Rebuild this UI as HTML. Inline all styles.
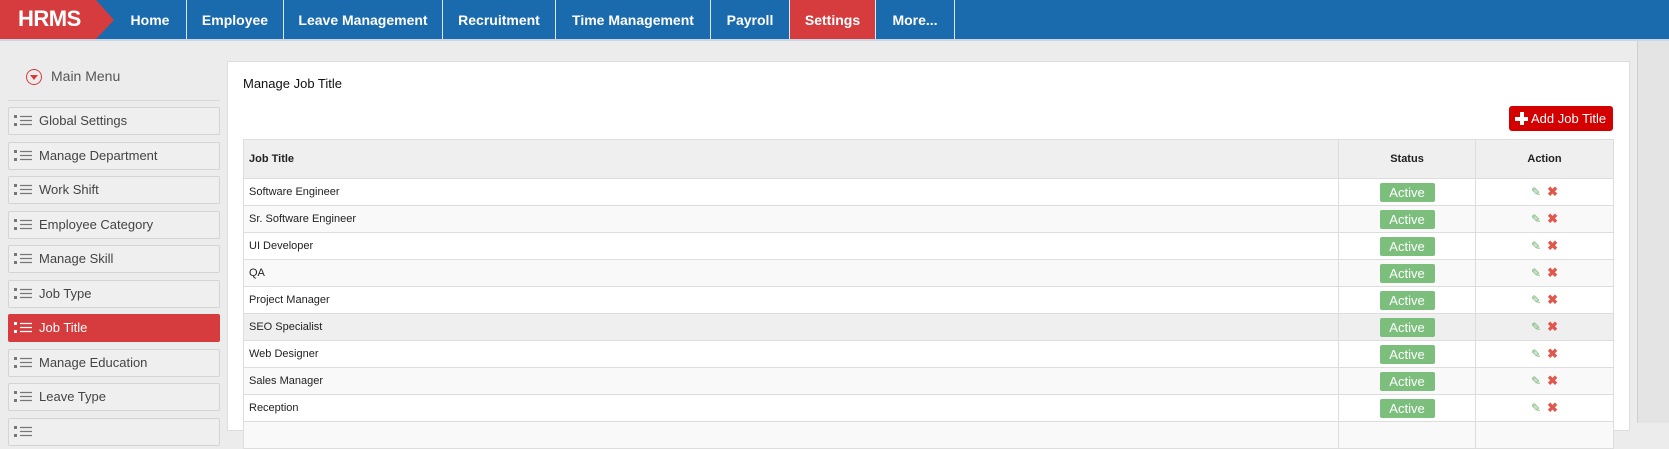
<!DOCTYPE html>
<html><head><style>
*{margin:0;padding:0;box-sizing:border-box}
body{width:1669px;height:423px;overflow:hidden;background:#ececec;font-family:"Liberation Sans",sans-serif;position:relative}
.nav{position:absolute;left:0;top:0;width:1669px;height:41px;background:#1a6aae;border-bottom:2px solid #c9d6e3}
.logo{position:absolute;left:0;top:0;width:96px;height:39px;background:#d63c3e;color:#fff;font-weight:bold;font-size:22px;padding:6px 0 0 18px;letter-spacing:-0.5px}
.logo:after{content:"";position:absolute;right:-18px;top:0;border-left:18px solid #d63c3e;border-top:20px solid transparent;border-bottom:19px solid transparent}
.ni{position:absolute;top:0;height:39px;color:#fff;font-weight:bold;font-size:14px;line-height:40px;text-align:center;border-right:1px solid #dfe8f2}
.side{position:absolute;left:8px;width:212px;height:28px;background:#efefef;border:1px solid #d4d4d4;border-radius:2px;font-size:13px;color:#444;line-height:26px;padding-left:30px}
.side i{position:absolute;left:5px;top:7px;width:20px;height:12px}
.side svg{display:block}
.side.act{background:#d63c3e;border-color:#d63c3e;color:#fff}
.panel{position:absolute;left:227px;top:61px;width:1403px;height:370px;background:#fff;border:1px solid #ddd}
table{position:absolute;left:243px;top:139px;width:1371px;border-collapse:collapse;font-size:11px;color:#222}
td,th{border:1px solid #ddd;height:27px;padding:0 5px;vertical-align:middle}
th{height:39px;background:#efefef;font-weight:bold;text-align:left}
tr:nth-child(odd) td{background:#f9f9f9}
.c{text-align:center}
.b{display:inline-block;background:#7cbf7d;color:#fff;font-size:13px;width:55px;height:19px;line-height:19px;border-radius:2px}
.x{color:#e2574c;font-weight:bold;font-size:13px;margin-left:6px}
.p{color:#6fb06f;font-size:12px}
</style></head><body>
<div class="nav">
<div class="logo">HRMS</div>
<div class="ni" style="left:114px;width:73px;border-left:none">Home</div>
<div class="ni" style="left:187px;width:97px">Employee</div>
<div class="ni" style="left:284px;width:159px">Leave Management</div>
<div class="ni" style="left:443px;width:113px">Recruitment</div>
<div class="ni" style="left:556px;width:155px">Time Management</div>
<div class="ni" style="left:711px;width:79px">Payroll</div>
<div class="ni" style="left:790px;width:86px;background:#d63c3e">Settings</div>
<div class="ni" style="left:876px;width:79px">More...</div>
</div>
<div style="position:absolute;left:26px;top:69px;width:16px;height:16px;border:1.5px solid #d63c3e;border-radius:50%"><div style="position:absolute;left:3px;top:5px;border-top:5px solid #d63c3e;border-left:4px solid transparent;border-right:4px solid transparent"></div></div>
<div style="position:absolute;left:51px;top:68px;font-size:14px;color:#555">Main Menu</div>
<div style="position:absolute;left:8px;top:100px;width:212px;border-top:1px solid #d8d8d8"></div>
<div id="s"></div>
<div class="panel"></div>
<div style="position:absolute;left:243px;top:76px;font-size:13px;color:#111">Manage Job Title</div>
<div style="position:absolute;left:1509px;top:106px;width:104px;height:25px;background:#d40000;border-radius:3px;color:#fff;font-size:13px;line-height:25px;padding-left:22px"><span style="position:absolute;left:6px;top:6px;width:13px;height:13px;background:linear-gradient(#fff,#fff) center/13px 4px no-repeat,linear-gradient(#fff,#fff) center/4px 13px no-repeat"></span>Add Job Title</div>
<table>
<tr><th>Job Title</th><th class="c" style="width:137px">Status</th><th class="c" style="width:138px">Action</th></tr>
<tr><td>Software Engineer</td><td class="c"><span class="b">Active</span></td><td class="c"><span class="p">✎</span><span class="x">✖</span></td></tr>
<tr><td>Sr. Software Engineer</td><td class="c"><span class="b">Active</span></td><td class="c"><span class="p">✎</span><span class="x">✖</span></td></tr>
<tr><td>UI Developer</td><td class="c"><span class="b">Active</span></td><td class="c"><span class="p">✎</span><span class="x">✖</span></td></tr>
<tr><td>QA</td><td class="c"><span class="b">Active</span></td><td class="c"><span class="p">✎</span><span class="x">✖</span></td></tr>
<tr><td>Project Manager</td><td class="c"><span class="b">Active</span></td><td class="c"><span class="p">✎</span><span class="x">✖</span></td></tr>
<tr><td style="background:#efefef">SEO Specialist</td><td class="c" style="background:#efefef"><span class="b">Active</span></td><td class="c" style="background:#efefef"><span class="p">✎</span><span class="x">✖</span></td></tr>
<tr><td>Web Designer</td><td class="c"><span class="b">Active</span></td><td class="c"><span class="p">✎</span><span class="x">✖</span></td></tr>
<tr><td>Sales Manager</td><td class="c"><span class="b">Active</span></td><td class="c"><span class="p">✎</span><span class="x">✖</span></td></tr>
<tr><td>Reception</td><td class="c"><span class="b">Active</span></td><td class="c"><span class="p">✎</span><span class="x">✖</span></td></tr>
<tr><td>&nbsp;</td><td></td><td></td></tr>
</table>
<div style="position:absolute;left:1637px;top:41px;width:32px;height:382px;background:#e4e4e4;border-left:1px solid #cfcfcf"></div>
<script>
var n=["Global Settings","Manage Department","Work Shift","Employee Category","Manage Skill","Job Type","Job Title","Manage Education","Leave Type",""],h="";
for(var i=0;i<n.length;i++){var a=i==6,c=a?"#fff":"#777";
h+='<div class="side'+(a?' act':'')+'" style="top:'+(107+i*34.5)+'px"><i><svg width="20" height="12"><rect x="0" y="0" width="3" height="3" fill="'+c+'"/><rect x="0" y="8" width="3" height="3" fill="'+c+'"/><path d="M6 1.5H18M6 5.5H18M6 9.5H18" stroke="'+c+'" stroke-width="1.2"/></svg></i>'+n[i]+'</div>';}
document.getElementById("s").innerHTML=h;
</script>
</body></html>
